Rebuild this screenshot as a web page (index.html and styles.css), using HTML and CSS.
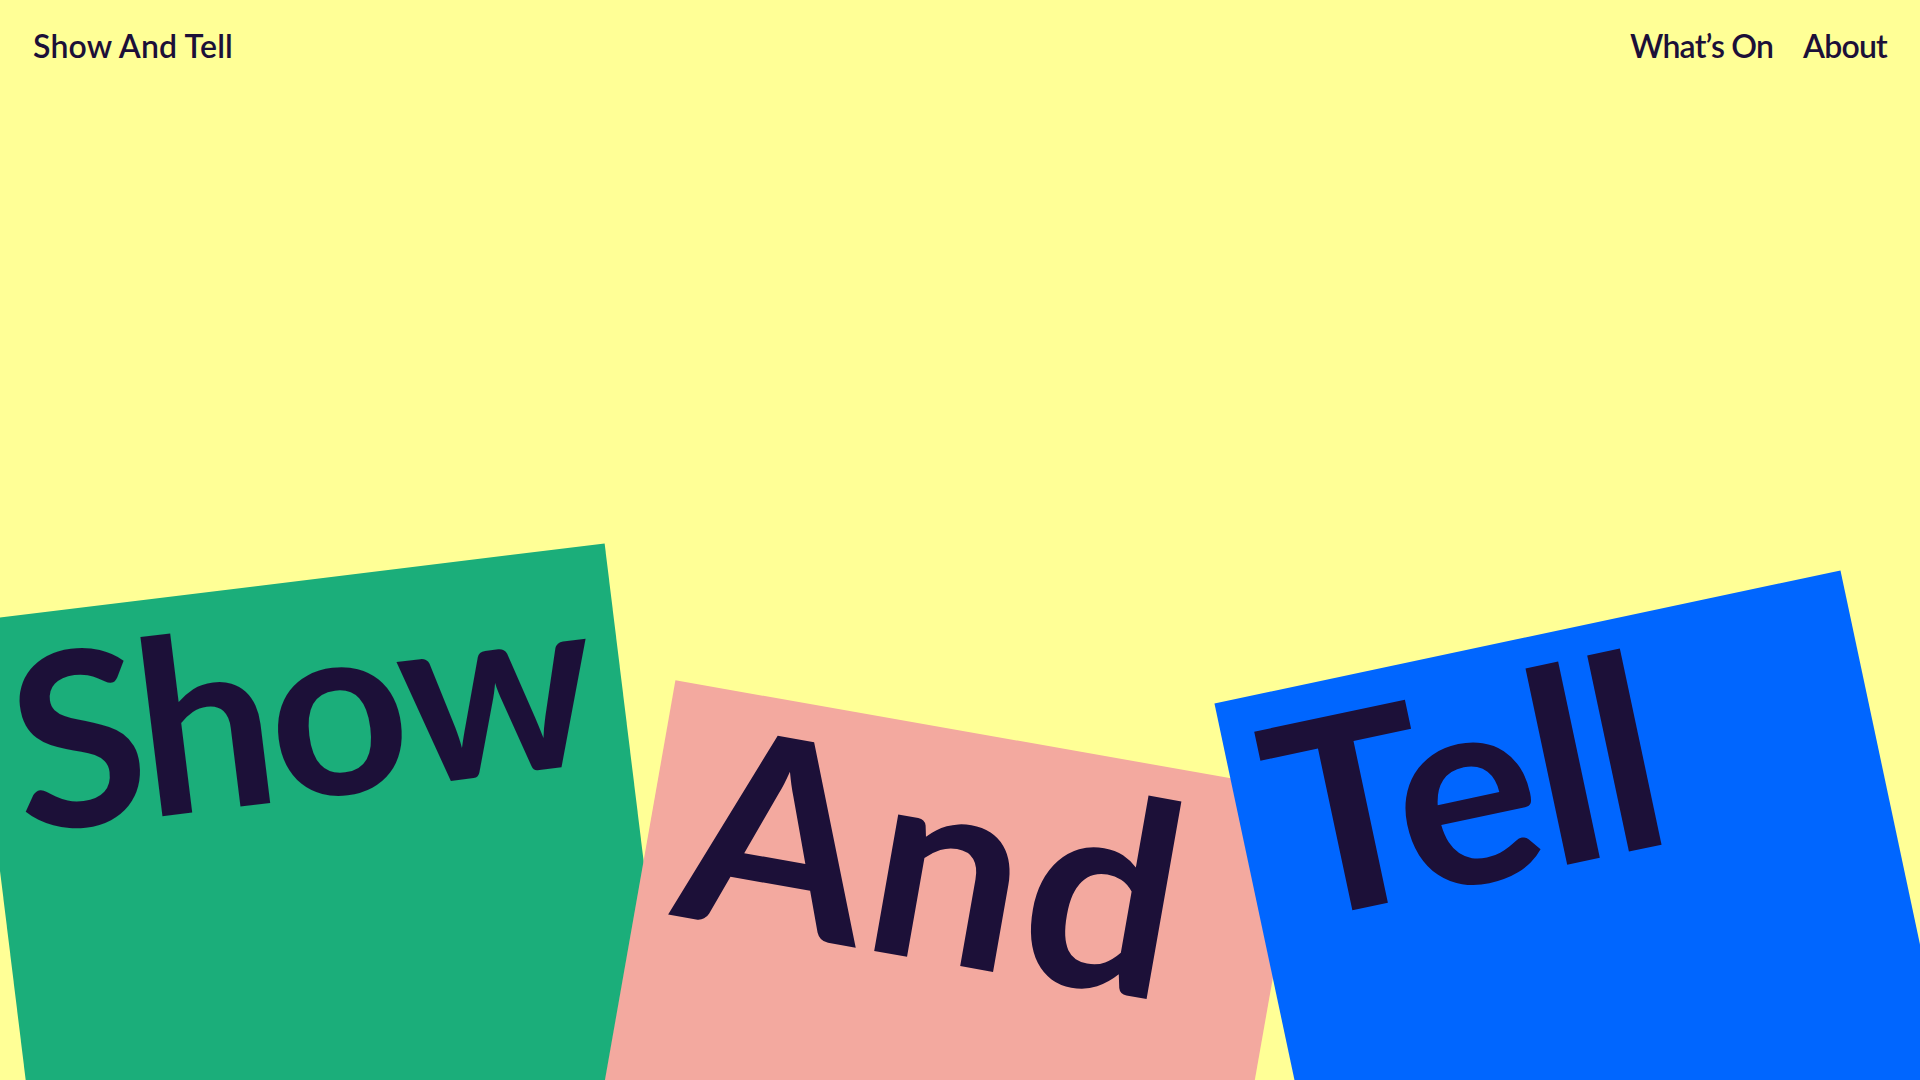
FILE: index.html
```html
<!DOCTYPE html>
<html lang="en">
<head>
<meta charset="utf-8">
<title>Show And Tell</title>
<link rel="stylesheet" href="styles.css">
</head>
<body>
<header class="site-header">
  <a class="brand" href="#">Show And Tell</a>
  <nav class="nav">
    <a class="nav-link" href="#">What’s On</a>
    <a class="nav-link" href="#">About</a>
  </nav>
</header>
<main class="stage">
  <div class="card card-green"><span class="word">Show</span></div>
  <div class="card card-pink"><span class="word">And</span></div>
  <div class="card card-blue"><span class="word">Tell</span></div>
</main>
</body>
</html>
```

FILE: styles.css
```css
* { box-sizing: border-box; }

html, body {
  margin: 0;
  padding: 0;
}

body {
  width: 1920px;
  height: 1080px;
  overflow: hidden;
  background: #ffff96;
  color: #1c1038;
  font-family: "Lato", "Inter", "Liberation Sans", sans-serif;
}

.site-header {
  display: flex;
  justify-content: space-between;
  align-items: flex-start;
  padding: 30px 33px 0 33px;
  height: 90px;
}

.brand,
.nav-link {
  color: #1c1038;
  text-decoration: none;
  font-size: 32px;
  font-weight: 600;
  line-height: 1;
}

.brand { letter-spacing: 0.2px; }

.nav {
  display: flex;
  gap: 30px;
}

.nav-link { letter-spacing: -0.8px; }

.stage {
  display: flex;
  align-items: flex-start;
  margin-top: 490px;
}

.card {
  flex: 0 0 640px;
  width: 640px;
  height: 640px;
  padding: 0 0 0 24px;
}

.word {
  display: block;
  font-weight: 700;
  line-height: 0.92;
  white-space: nowrap;
}

.card-green {
  background: #1bae7a;
  transform: translateX(6px) rotate(-7deg);
  padding-top: 12px;
  padding-left: 27px;
}
.card-green .word {
  font-size: 243px;
  letter-spacing: -5.5px;
}

.card-pink {
  background: #f3a99f;
  margin-top: 151px;
  transform: translateX(-25px) rotate(10deg);
  padding-top: 4px;
  padding-left: 35px;
}
.card-pink .word {
  font-size: 270px;
  letter-spacing: 4px;
}

.card-blue {
  background: #0066ff;
  margin-top: 50px;
  transform: translateX(-6px) rotate(-12deg);
  padding-top: 3px;
  padding-left: 29px;
}
.card-blue .word {
  font-size: 270px;
  letter-spacing: -4px;
}
```
